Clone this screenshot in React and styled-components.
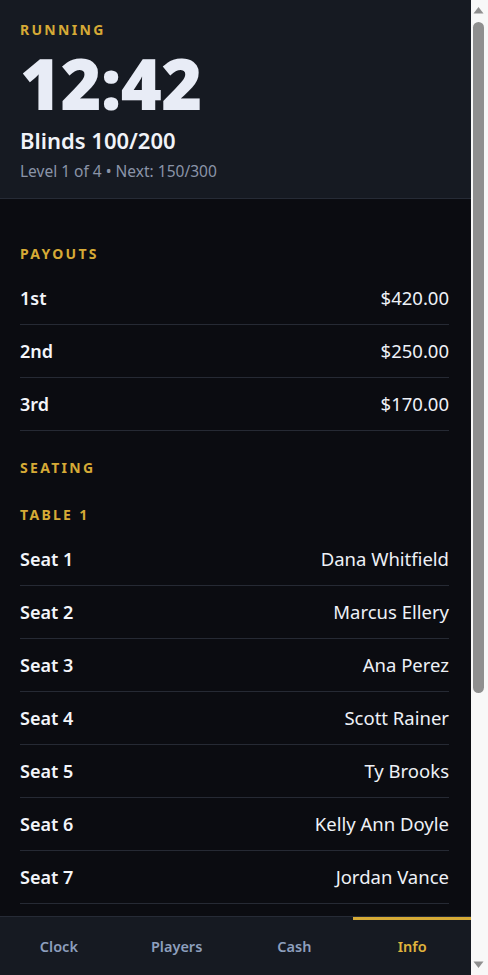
import styled, { createGlobalStyle } from "styled-components";

const GlobalStyle = createGlobalStyle`
    html, body {
        margin: 0;
        padding: 0;
        height: 100%;
        background: #0b0c11;
        overflow: hidden;
    }

    body {
        font-family: "Noto Sans", "Open Sans", sans-serif;
        color: #f1f3f8;
    }

    * {
        box-sizing: border-box;
    }
`

const payouts = [
    { place: "1st", amount: "$420.00" },
    { place: "2nd", amount: "$250.00" },
    { place: "3rd", amount: "$170.00" },
]

const tables = [
    {
        name: "Table 1",
        seats: [
            "Dana Whitfield",
            "Marcus Ellery",
            "Ana Perez",
            "Scott Rainer",
            "Ty Brooks",
            "Kelly Ann Doyle",
            "Jordan Vance",
            "Priya Nair",
            "Owen Castillo",
        ],
    },
    {
        name: "Table 2",
        seats: ["Leah Morgan", "Victor Hale", "Sam Okafor", "Nina Brandt"],
    },
]

const tabs = ["Clock", "Players", "Cash", "Info"]

function App() {
    return (
        <>
            <GlobalStyle />
            <Frame>
                <Shell>
                    <ClockHeader>
                        <Eyebrow>Running</Eyebrow>
                        <Time>12:42</Time>
                        <Blinds>Blinds 100/200</Blinds>
                        <LevelInfo>Level 1 of 4 • Next: 150/300</LevelInfo>
                    </ClockHeader>

                    <Main>
                        <Eyebrow>Payouts</Eyebrow>
                        <List>
                            {payouts.map((p) => (
                                <Row key={p.place}>
                                    <Label>{p.place}</Label>
                                    <Value>{p.amount}</Value>
                                </Row>
                            ))}
                        </List>

                        <Eyebrow $spaced>Seating</Eyebrow>
                        {tables.map((t) => (
                            <div key={t.name}>
                                <Eyebrow $spaced>{t.name}</Eyebrow>
                                <List>
                                    {t.seats.map((name, i) => (
                                        <Row key={name}>
                                            <Label>Seat {i + 1}</Label>
                                            <Value>{name}</Value>
                                        </Row>
                                    ))}
                                </List>
                            </div>
                        ))}
                    </Main>

                    <TabBar>
                        {tabs.map((tab) => (
                            <Tab key={tab} $active={tab === "Info"}>
                                {tab}
                            </Tab>
                        ))}
                    </TabBar>
                </Shell>

                {/* classic scrollbar rail, as seen in the capture */}
                <Rail aria-hidden="true">
                    <RailButton>
                        <svg width="17" height="17" viewBox="0 0 17 17">
                            <polygon points="2.5,13.5 7.5,7 12.5,13.5" fill="#8f8f8f" />
                        </svg>
                    </RailButton>
                    <Track>
                        <Thumb />
                    </Track>
                    <RailButton>
                        <svg width="17" height="17" viewBox="0 0 17 17">
                            <polygon points="2.5,3.5 12.5,3.5 7.5,10" fill="#8f8f8f" />
                        </svg>
                    </RailButton>
                </Rail>
            </Frame>
        </>
    )
}

const Frame = styled.div`
    display: flex;
    height: 100vh;
`

const Shell = styled.div`
    flex: 1;
    min-width: 0;
    overflow-y: auto;
    scrollbar-width: none;
    display: flex;
    flex-direction: column;
`

const Rail = styled.div`
    width: 17px;
    flex-shrink: 0;
    display: flex;
    flex-direction: column;
    background: #f8f8f8;
`

const RailButton = styled.div`
    height: 17px;
    flex-shrink: 0;

    svg {
        display: block;
    }
`

const Track = styled.div`
    flex: 1;
    padding: 5px 4px 0 2px;
`

const Thumb = styled.div`
    height: 671px;
    border-radius: 6px;
    background: #8f8f8f;
`

const ClockHeader = styled.header`
    flex-shrink: 0;
    background: #161a22;
    border-bottom: 1px solid #262b36;
    padding: 20px 20px 17px;
`

const Eyebrow = styled.div`
    font-size: 14px;
    line-height: 20px;
    font-weight: 700;
    letter-spacing: 2.3px;
    text-transform: uppercase;
    color: #d6aa36;
    margin-top: ${(p) => (p.$spaced ? "27px" : "0")};
`

const Time = styled.div`
    margin-top: 8px;
    font-size: 70px;
    line-height: 70px;
    font-weight: 900;
    letter-spacing: -0.5px;
    color: #e8ecf6;
`

const Blinds = styled.div`
    margin-top: 8px;
    font-size: 22px;
    line-height: 28px;
    font-weight: 600;
    color: #f1f3f8;
`

const LevelInfo = styled.div`
    margin-top: 7px;
    font-size: 15.5px;
    line-height: 20px;
    color: #8a94a8;
`

const Main = styled.main`
    flex-shrink: 0;
    padding: 45px 22px 38px 20px;
`

const List = styled.div`
    margin-top: 8px;
    display: flex;
    flex-direction: column;
`

const Row = styled.div`
    display: flex;
    justify-content: space-between;
    align-items: center;
    padding: 14px 0;
    border-bottom: 1px solid #262a34;
    font-size: 18px;
    line-height: 24px;
`

const Label = styled.span`
    font-weight: 600;
    color: #f3f5fa;
`

const Value = styled.span`
    font-weight: 400;
    font-size: 18.5px;
    color: #eef1f7;
`

const TabBar = styled.nav`
    position: sticky;
    bottom: 0;
    z-index: 3;
    flex-shrink: 0;
    display: grid;
    grid-template-columns: repeat(4, 1fr);
    height: 59px;
    background: #161a22;
    border-top: 1px solid #262b36;
`

const Tab = styled.button`
    border: none;
    border-top: 3px solid ${(p) => (p.$active ? "#d6aa36" : "transparent")};
    background: transparent;
    padding: 0 0 3px;
    font-family: inherit;
    font-size: 14.5px;
    font-weight: 600;
    color: ${(p) => (p.$active ? "#e0b43c" : "#8d9fbd")};
    cursor: pointer;
`

export default App
